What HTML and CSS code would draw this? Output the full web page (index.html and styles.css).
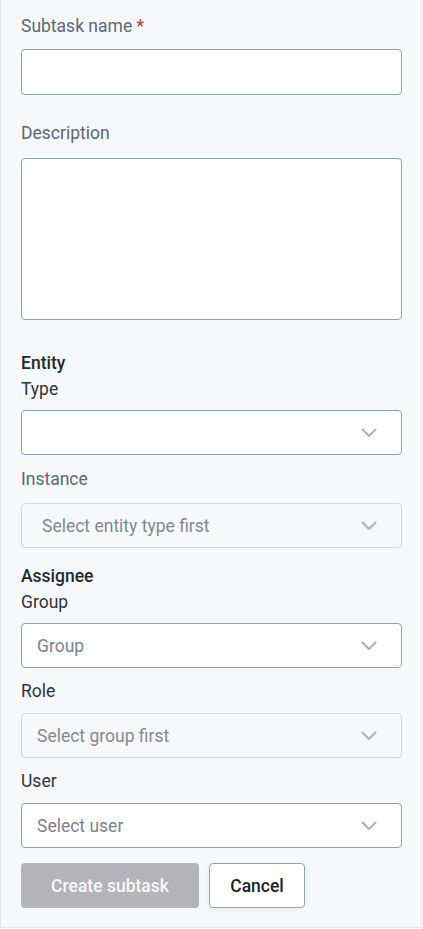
FILE: index.html
```html
<!DOCTYPE html>
<html>
<head>
<meta charset="utf-8">
<link rel="stylesheet" href="styles.css">
</head>
<body>
<div class="panel">
  <form class="form">
    <div class="field">
      <label class="label muted">Subtask name <span class="req">*</span></label>
      <input class="input" type="text">
    </div>
    <div class="field">
      <label class="label muted">Description</label>
      <textarea class="input textarea"></textarea>
    </div>

    <div class="group">
      <div class="group-title">Entity</div>
      <div class="field tight">
        <label class="label">Type</label>
        <div class="select"><span class="placeholder"></span><svg class="chev" viewBox="0 0 16 10"><path d="M1.5 1.5 L8 8 L14.5 1.5" /></svg></div>
      </div>
      <div class="field sub instance">
        <label class="label muted">Instance</label>
        <div class="select disabled wide"><span class="placeholder">Select entity type first</span><svg class="chev" viewBox="0 0 16 10"><path d="M1.5 1.5 L8 8 L14.5 1.5" /></svg></div>
      </div>
    </div>

    <div class="group assignee">
      <div class="group-title">Assignee</div>
      <div class="field tight">
        <label class="label">Group</label>
        <div class="select"><span class="placeholder">Group</span><svg class="chev" viewBox="0 0 16 10"><path d="M1.5 1.5 L8 8 L14.5 1.5" /></svg></div>
      </div>
      <div class="field sub">
        <label class="label">Role</label>
        <div class="select disabled"><span class="placeholder">Select group first</span><svg class="chev" viewBox="0 0 16 10"><path d="M1.5 1.5 L8 8 L14.5 1.5" /></svg></div>
      </div>
      <div class="field sub">
        <label class="label">User</label>
        <div class="select"><span class="placeholder">Select user</span><svg class="chev" viewBox="0 0 16 10"><path d="M1.5 1.5 L8 8 L14.5 1.5" /></svg></div>
      </div>
    </div>

    <div class="actions">
      <button type="button" class="btn primary" disabled>Create subtask</button>
      <button type="button" class="btn secondary">Cancel</button>
    </div>
  </form>
</div>
</body>
</html>
```

FILE: styles.css
```css
* { box-sizing: border-box; }
html, body { margin: 0; padding: 0; background: #ffffff; }
body { font-family: Roboto, "Liberation Sans", Arial, sans-serif; font-size: 17.5px; color: #2b3035; }

.panel {
  width: 422px;
  height: 928px;
  background: #f6f8fa;
  border: 1px solid #e3e7eb;
  border-top: none;
  padding: 12px 20px 0 20px;
}

.form { display: flex; flex-direction: column; }

.field { display: flex; flex-direction: column; }
.field + .field { margin-top: 24px; }

.label {
  line-height: 28px;
  color: #2f353b;
  margin-bottom: 9px;
}
.label.muted { color: #5f6873; }
.req { color: #d32f2f; }

.input {
  width: 381px;
  height: 46px;
  border: 1px solid #8fa3ad;
  border-radius: 4px;
  background: #ffffff;
  font: inherit;
  padding: 0 16px;
  outline: none;
}
.textarea { height: 162px; resize: none; display: block; margin-top: 2px; }

.group { margin-top: 31px; display: flex; flex-direction: column; }
.group-title { line-height: 24px; font-weight: 500; color: #23282d; }
.assignee { margin-top: 16px; }

.field.tight .label { margin-bottom: 7px; }
.field.sub { margin-top: 9px; }
.field.sub .label { margin-bottom: 8px; }
.field.sub.instance { margin-top: 10px; }
.field.sub.instance .label { margin-bottom: 10px; }

.select {
  width: 381px;
  height: 45px;
  border: 1px solid #8fa3ad;
  border-radius: 4px;
  background: #ffffff;
  display: flex;
  align-items: center;
  justify-content: space-between;
  padding: 0 24px 0 15px;
}
.select.wide { padding-left: 20px; }
.select.disabled { background: #f6f8fa; border-color: #cfd6dc; }
.placeholder { color: #7c8289; line-height: 24px; }
.select.disabled .placeholder { color: #84898f; }

.chev { width: 16px; height: 10px; }
.chev path { fill: none; stroke: #aeb1b4; stroke-width: 2; stroke-linecap: round; stroke-linejoin: round; }

.actions { display: flex; gap: 10px; margin-top: 15px; }
.btn {
  height: 45px;
  border-radius: 4px;
  font-family: inherit;
  font-size: 17.5px;
  font-weight: 500;
}
.btn.primary {
  width: 178px;
  background: #b4b4b8;
  color: #f7f8f9;
  border: none;
}
.btn.secondary {
  width: 96px;
  background: #ffffff;
  color: #202428;
  border: 1px solid #8fa3ad;
  box-shadow: 0 2px 6px rgba(0,0,0,0.06);
}
```
